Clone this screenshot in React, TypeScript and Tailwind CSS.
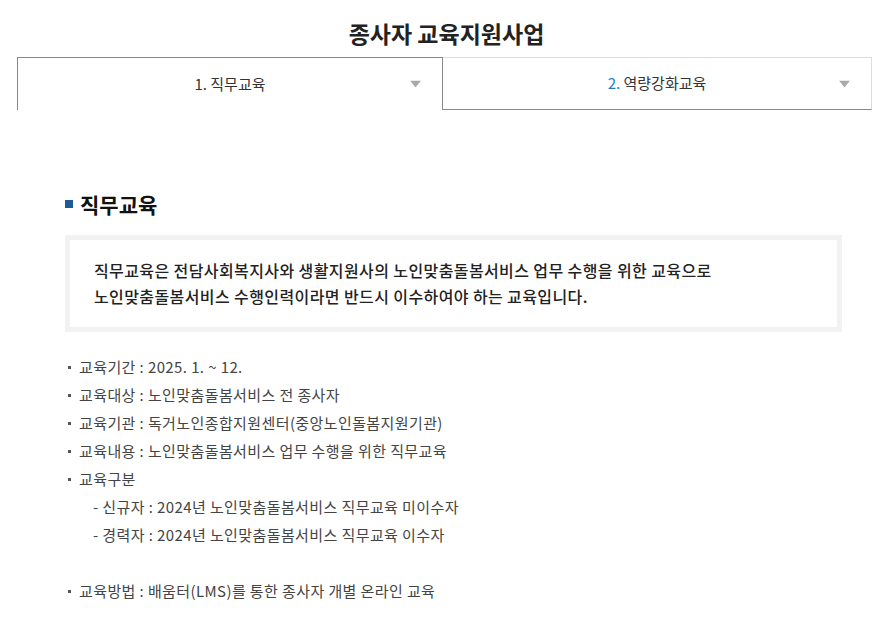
import React from 'react';

const font = { fontFamily: '"Noto Sans CJK KR", "Noto Sans", sans-serif' };

const Arrow: React.FC = () => (
    <svg width="11" height="7" viewBox="0 0 11 7" className="absolute right-[21px] top-1/2 -translate-y-1/2">
        <path d="M0 0 H11 L5.5 7 Z" fill="#a9a9a9" />
    </svg>
);

const items: { label: string; value?: string }[] = [
    { label: '교육기간', value: '2025. 1. ~ 12.' },
    { label: '교육대상', value: '노인맞춤돌봄서비스 전 종사자' },
    { label: '교육기관', value: '독거노인종합지원센터(중앙노인돌봄지원기관)' },
    { label: '교육내용', value: '노인맞춤돌봄서비스 업무 수행을 위한 직무교육' },
    { label: '교육구분' },
];

const Bullet: React.FC<{ children: React.ReactNode }> = ({ children }) => (
    <li className="flex items-center h-[28px]">
        <span className="w-[3px] h-[3px] bg-[#555] ml-[3px] mr-[8px] flex-shrink-0" />
        <span>{children}</span>
    </li>
);

export default function App() {
    return (
        <div className="bg-white min-h-[621px] text-[#222]" style={font}>
            <h1 className="text-center text-[23px] font-bold leading-[30px] pt-[18px] text-[#222]">
                종사자 교육지원사업
            </h1>

            <div className="ml-[17px] w-[855px] mt-[9px] flex h-[53px]">
                <div className="relative w-[426px] border-l border-t border-r border-[#888] flex items-center justify-center text-[15px] text-[#333]">
                    <span>1. 직무교육</span>
                    <Arrow />
                </div>
                <div className="relative flex-1 border-t border-r border-[#ddd] border-b-[#888] border-b flex items-center justify-center text-[15px] text-[#333]">
                    <span>
                        <span className="text-[#1a7fc4]">2.</span> 역량강화교육
                    </span>
                    <Arrow />
                </div>
            </div>

            <div className="ml-[65px] w-[777px] mt-[79px]">
                <h2 className="flex items-center text-[21px] font-bold leading-[30px] text-[#111]">
                    <span className="w-[8px] h-[8px] bg-[#1d5a96] mr-[7px]" />
                    직무교육
                </h2>

                <div className="mt-[16px] border-[5px] border-[#f1f2f4] px-[24px] pt-[17px] pb-[18px] text-[16px] font-medium leading-[26px] text-[#222] tracking-[0.4px]">
                    <p>직무교육은 전담사회복지사와 생활지원사의 노인맞춤돌봄서비스 업무 수행을 위한 교육으로</p>
                    <p>노인맞춤돌봄서비스 수행인력이라면 반드시 이수하여야 하는 교육입니다.</p>
                </div>

                <ul className="mt-[21px] text-[15px] text-[#444] tracking-[0.4px]">
                    {items.map((it) => (
                        <Bullet key={it.label}>
                            {it.label}
                            {it.value ? ` : ${it.value}` : ''}
                        </Bullet>
                    ))}
                    <li className="h-[28px] flex items-center pl-[28px]">- 신규자 : 2024년 노인맞춤돌봄서비스 직무교육 미이수자</li>
                    <li className="h-[28px] flex items-center pl-[28px]">- 경력자 : 2024년 노인맞춤돌봄서비스 직무교육 이수자</li>
                    <li className="h-[28px]" />
                    <Bullet>교육방법 : 배움터(LMS)를 통한 종사자 개별 온라인 교육</Bullet>
                </ul>
            </div>
        </div>
    );
}
